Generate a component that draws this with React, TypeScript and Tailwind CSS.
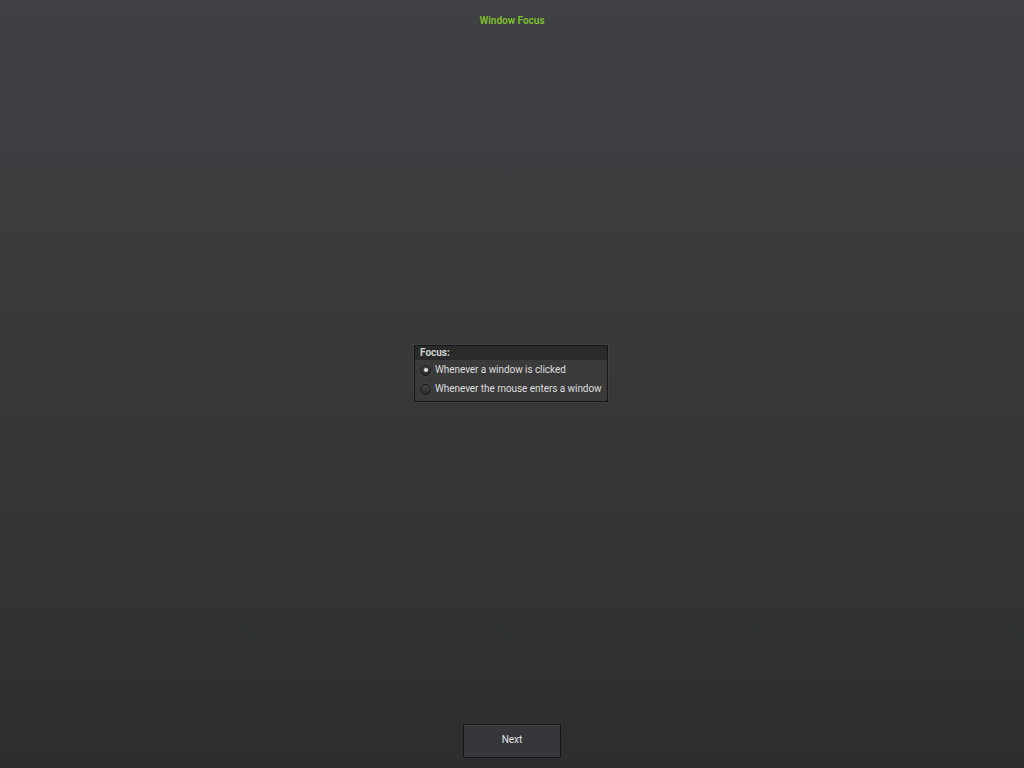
import React from "react";

const options = [
  { label: "Whenever a window is clicked", checked: true },
  { label: "Whenever the mouse enters a window", checked: false },
];

const Radio: React.FC<{ checked: boolean }> = ({ checked }) => (
  <span className="w-[11px] h-[11px] rounded-full border border-[#181818] bg-gradient-to-b from-[#444444] to-[#2c2c2c] shadow-[0_0_0_1px_rgba(255,255,255,0.05)] flex items-center justify-center shrink-0">
    {checked && <span className="w-[4px] h-[4px] rounded-full bg-[#e6e6e6]" />}
  </span>
);

export default function App() {
  return (
    <div
      className="w-[1024px] h-[768px] flex flex-col items-center bg-gradient-to-b from-[#3f4144] via-[#37383a] to-[#2e2e2e] text-[#dcdcdc]"
      style={{ fontFamily: "Roboto, 'Liberation Sans', sans-serif" }}
    >
      <h1 className="mt-[15px] h-[12px] text-[10px] leading-[12px] font-bold text-[#7dbb2f]">
        Window Focus
      </h1>

      <div className="flex-1 flex items-center justify-center pb-[5px] pr-[2px]">
        <div className="w-[194px] border border-[#161616] bg-[#3a3a3a] shadow-[0_0_0_1px_rgba(255,255,255,0.04)]">
          <div className="h-[14px] bg-[#2a2a2a] px-[5px] text-[10px] leading-[14px] font-bold text-[#cfcfcf]">
            Focus:
          </div>
          <div className="flex flex-col pt-[1px] pb-[2px]">
            {options.map((o) => (
              <div key={o.label} className="h-[19px] flex items-center gap-[4px] px-[5px]">
                <Radio checked={o.checked} />
                <span className="text-[10px] leading-[12px] tracking-[-0.06px] text-[#dedede] whitespace-nowrap">
                  {o.label}
                </span>
              </div>
            ))}
          </div>
        </div>
      </div>

      <button className="mb-[10px] w-[98px] h-[34px] pb-[3px] border border-[#161616] bg-[#36373a] shadow-[inset_0_1px_0_rgba(255,255,255,0.06)] text-[10px] text-[#e2e2e2]">
        Next
      </button>
    </div>
  );
}
